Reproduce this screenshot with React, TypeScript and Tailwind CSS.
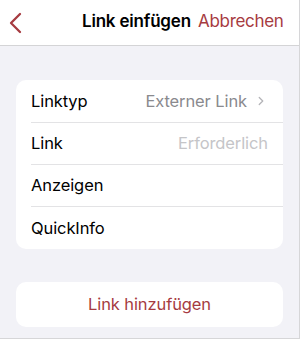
import { ChevronRight } from 'lucide-react';

const rows = [
  { label: 'Linktyp', value: 'Externer Link', chevron: true },
  { label: 'Link', placeholder: 'Erforderlich' },
  { label: 'Anzeigen' },
  { label: 'QuickInfo' },
];

export default function App() {
  return (
    <div
      className="w-[300px] h-[339px] bg-[#f2f2f7] border-r border-b border-[#d6d6d8] flex flex-col overflow-hidden"
      style={{ fontFamily: 'Inter, "Noto Sans", sans-serif' }}
    >
      {/* Header */}
      <div className="h-[46px] bg-white border-b border-[#d4d4d6] flex items-center relative shrink-0">
        <button className="pl-[8px] text-[#a63b41]">
          <svg width="14" height="22" viewBox="0 0 14 22" fill="none">
            <path d="M12 2 L3 11 L12 20" stroke="currentColor" strokeWidth="2.3" strokeLinecap="round" strokeLinejoin="round" />
          </svg>
        </button>
        <div className="absolute left-[82px] top-[9px] text-[17px] font-semibold text-black tracking-[-0.2px]">
          Link einfügen
        </div>
        <div className="absolute left-[198px] top-[9px] w-[85px] overflow-hidden whitespace-nowrap text-[17px] text-[#a63b41] tracking-[-0.3px]">
          Abbrechen
        </div>
      </div>

      {/* Form */}
      <div className="px-[16px] pt-[34px]">
        <div className="bg-white rounded-[10px]">
          {rows.map((row, i) => (
            <div key={row.label} className="pl-[15px] flex">
              <div
                className={`flex-1 flex items-center justify-between pr-[15px] ${
                  i === 0 ? 'h-[43px]' : 'h-[42px]'
                } ${i < rows.length - 1 ? 'border-b border-[#e3e3e5]' : ''}`}
              >
                <span className="text-[16.5px] text-black tracking-[-0.1px]">{row.label}</span>
                {row.value && (
                  <span className="flex items-center gap-[7px] text-[16.5px] text-[#8a8a8e] tracking-[-0.1px]">
                    {row.value}
                    {row.chevron && <ChevronRight className="w-[14px] h-[14px] text-[#b4b4b8]" strokeWidth={2.2} />}
                  </span>
                )}
                {row.placeholder && (
                  <span className="text-[16.5px] text-[#c5c5c8] tracking-[-0.1px]">{row.placeholder}</span>
                )}
              </div>
            </div>
          ))}
        </div>

        <button className="mt-[33px] w-full h-[45px] bg-white rounded-[10px] text-[16.5px] text-[#a63b41] tracking-[-0.1px]">
          Link hinzufügen
        </button>
      </div>
    </div>
  );
}
